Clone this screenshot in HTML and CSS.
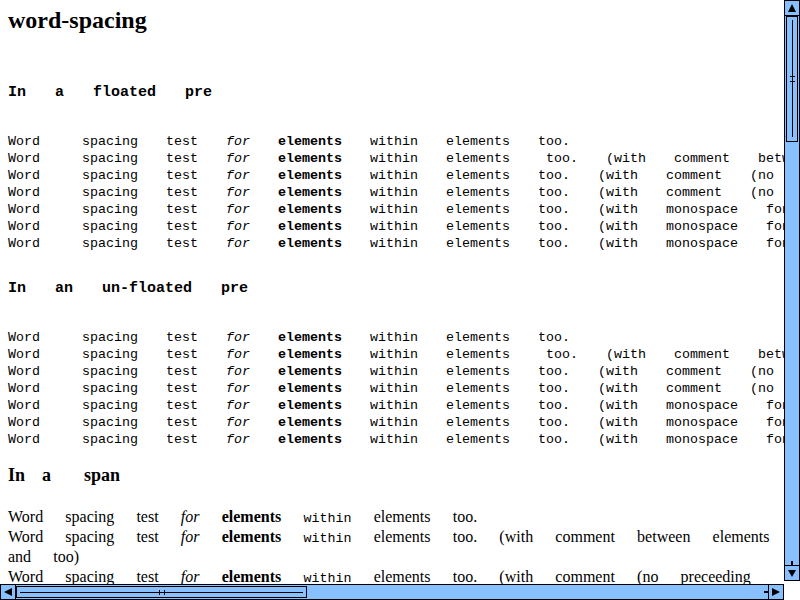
FILE: index.html
```html
<!DOCTYPE html>
<html>
<head>
<meta charset="utf-8">
<title>word-spacing</title>
<link rel="stylesheet" href="styles.css">
</head>
<body>
<div class="window">
  <div class="viewport">
    <h1>word-spacing</h1>
    <h2 class="mh">In a floated pre</h2>
<pre class="ws"><span class="w1">Word</span> spacing test <em>for</em> <strong>elements</strong> within elements too.
<span class="w1">Word</span> spacing test <em>for</em> <strong>elements</strong> within elements <span class="x8">too.</span> (with comment between elements and too)
<span class="w1">Word</span> spacing test <em>for</em> <strong>elements</strong> within elements too. (with comment (no preceeding space) between elements and too)
<span class="w1">Word</span> spacing test <em>for</em> <strong>elements</strong> within elements too. (with comment (no following space) between elements and too)
<span class="w1">Word</span> spacing test <em>for</em> <strong>elements</strong> within elements too. (with monospace font from Word to elements)
<span class="w1">Word</span> spacing test <em>for</em> <strong>elements</strong> within elements too. (with monospace font from elements to within)
<span class="w1">Word</span> spacing test <em>for</em> <strong>elements</strong> within elements too. (with monospace font from spacing to too)</pre>
    <h2 class="mh second">In an un-floated pre</h2>
<pre class="ws second"><span class="w1">Word</span> spacing test <em>for</em> <strong>elements</strong> within elements too.
<span class="w1">Word</span> spacing test <em>for</em> <strong>elements</strong> within elements <span class="x8">too.</span> (with comment between elements and too)
<span class="w1">Word</span> spacing test <em>for</em> <strong>elements</strong> within elements too. (with comment (no preceeding space) between elements and too)
<span class="w1">Word</span> spacing test <em>for</em> <strong>elements</strong> within elements too. (with comment (no following space) between elements and too)
<span class="w1">Word</span> spacing test <em>for</em> <strong>elements</strong> within elements too. (with monospace font from Word to elements)
<span class="w1">Word</span> spacing test <em>for</em> <strong>elements</strong> within elements too. (with monospace font from elements to within)
<span class="w1">Word</span> spacing test <em>for</em> <strong>elements</strong> within elements too. (with monospace font from spacing to too)</pre>
    <h2 class="sh">In a <span class="gap">span</span></h2>
    <div class="spans">
      <div>Word spacing test <em>for</em> <strong>elements</strong> <span class="tt">within</span> elements too.</div>
      <div>Word spacing test <em>for</em> <strong>elements</strong> <span class="tt">within</span> elements too. (with comment between elements and too)</div>
      <div>Word spacing test <em>for</em> <strong>elements</strong> <span class="tt">within</span> elements too. (with comment (no preceeding space) between elements and too)</div>
      <div>Word spacing test <em>for</em> <strong>elements</strong> <span class="tt">within</span> elements too. (with comment (no following space) between elements and too)</div>
    </div>
  </div>

  <div class="vbar">
    <div class="sbtn vbtn top">
      <svg width="14" height="14" viewBox="0 0 14 14"><path d="M3 11 L7 3 L11 11 Z" fill="#000"/></svg>
    </div>
    <div class="vthumb">
      <svg width="14" height="126" viewBox="0 0 14 126">
        <rect x="1.5" y="0.5" width="11" height="125" fill="none" stroke="#000"/>
        <line x1="7.5" y1="4" x2="7.5" y2="121" stroke="#000"/>
        <line x1="5" y1="60.5" x2="10" y2="60.5" stroke="#000"/>
        <line x1="5" y1="65.5" x2="10" y2="65.5" stroke="#000"/>
      </svg>
    </div>
    <div class="trough"></div>
    <div class="vend">
      <svg width="14" height="4" viewBox="0 0 14 4"><rect x="6" y="0" width="2" height="4" fill="#000"/></svg>
    </div>
    <div class="sbtn vbtn bottom">
      <svg width="14" height="14" viewBox="0 0 14 14"><path d="M3 4 L11 4 L7 11 Z" fill="#000"/></svg>
    </div>
  </div>

  <div class="hbar">
    <div class="sbtn hbtn left">
      <svg width="14" height="14" viewBox="0 0 14 14"><path d="M11 3 L11 11 L3 7 Z" fill="#000"/></svg>
    </div>
    <div class="hthumb">
      <svg width="291" height="14" viewBox="0 0 291 14">
        <rect x="0.5" y="1.5" width="290" height="11" fill="none" stroke="#000"/>
        <line x1="4" y1="7.5" x2="287" y2="7.5" stroke="#000"/>
        <line x1="143.5" y1="5" x2="143.5" y2="10" stroke="#000"/>
        <line x1="148.5" y1="5" x2="148.5" y2="10" stroke="#000"/>
      </svg>
    </div>
    <div class="trough"></div>
    <div class="hend">
      <svg width="4" height="14" viewBox="0 0 4 14"><rect x="0" y="6" width="4" height="2" fill="#000"/></svg>
    </div>
    <div class="sbtn hbtn right">
      <svg width="14" height="14" viewBox="0 0 14 14"><path d="M3 3 L3 11 L11 7 Z" fill="#000"/></svg>
    </div>
  </div>

  <div class="corner"></div>
</div>
</body>
</html>
```

FILE: styles.css
```css
* { box-sizing: border-box; }

html, body {
  margin: 0;
  padding: 0;
  background: #fff;
}

body {
  width: 800px;
  height: 600px;
  overflow: hidden;
  font-family: "Liberation Serif", serif;
  color: #000;
}

.window {
  display: grid;
  grid-template-columns: 784px 16px;
  grid-template-rows: 584px 16px;
  width: 800px;
  height: 600px;
}

.viewport {
  overflow: hidden;
  padding: 8px 0 0 8px;
}

h1 {
  font: bold 24px/24px "Liberation Serif", serif;
  margin: 0;
}

.mh {
  font: bold 15px/17px "Liberation Mono", monospace;
  word-spacing: 20px;
  margin: 52px 0 0;
  white-space: nowrap;
}

.mh.second { margin-top: 28px; }

pre.ws {
  font: 13.333px/17px "Liberation Mono", monospace;
  word-spacing: 20px;
  margin: 32px 0 0;
}

pre.ws.second { margin-top: 32px; }

.w1 { margin-right: 14px; }
.x8 { margin-left: 8px; }

.sh {
  font: bold 18px/20px "Liberation Serif", serif;
  word-spacing: 12.5px;
  margin: 17px 0 0;
}

.sh .gap { margin-left: 16px; }

.spans {
  margin-top: 22px;
  width: 768px;
  font: 16px/20px "Liberation Serif", serif;
  word-spacing: 18.2px;
}

.tt {
  font: 13.333px/16px "Liberation Mono", monospace;
}

/* scrollbars */
.vbar {
  display: flex;
  flex-direction: column;
  width: 16px;
  height: 581px;
  background: #88c0ff;
  border-left: 1px solid #000;
  border-right: 1px solid #000;
}

.sbtn {
  display: flex;
  align-items: center;
  justify-content: center;
  background: #88c0ff;
  flex: none;
}

.sbtn svg, .vthumb svg, .hthumb svg, .vend svg, .hend svg { display: block; }

.vbtn { height: 16px; }
.vbtn.top { border-top: 1px solid #000; border-bottom: 1px solid #000; }
.vbtn.bottom { border-top: 1px solid #000; border-bottom: 1px solid #000; }

.vthumb { flex: none; height: 126px; }
.vend { flex: none; height: 4px; }

.trough { flex: 1; }

.hbar {
  display: flex;
  height: 16px;
  background: #88c0ff;
  border-top: 1px solid #000;
  border-bottom: 1px solid #000;
}

.hbtn { width: 16px; }
.hbtn.left { border-left: 1px solid #000; border-right: 1px solid #000; }
.hbtn.right { border-left: 1px solid #000; border-right: 1px solid #000; }

.hthumb { flex: none; width: 291px; }
.hend { flex: none; width: 4px; }

.corner { background: #fff; }
```
